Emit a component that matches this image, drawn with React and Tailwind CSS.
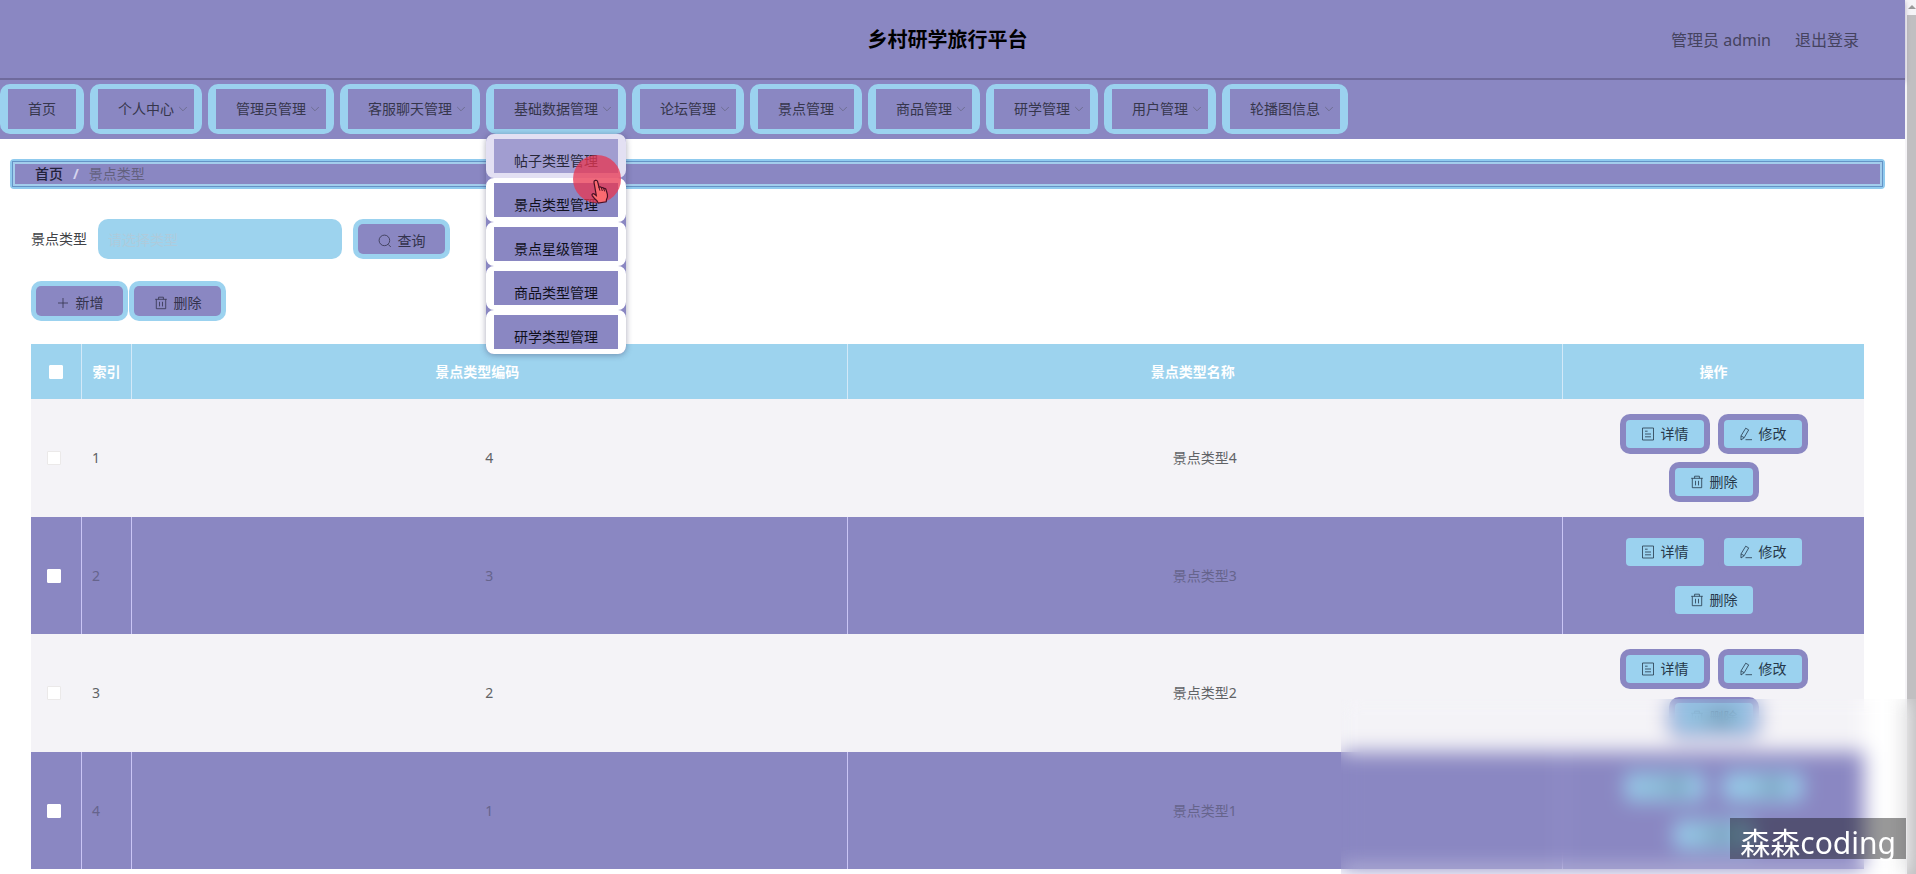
const MENU = [
  { label: "首页", leaf: true },
  { label: "个人中心" },
  { label: "管理员管理" },
  { label: "客服聊天管理" },
  {
    label: "基础数据管理",
    open: true,
    children: ["帖子类型管理", "景点类型管理", "景点星级管理", "商品类型管理", "研学类型管理"],
  },
  { label: "论坛管理" },
  { label: "景点管理" },
  { label: "商品管理" },
  { label: "研学管理" },
  { label: "用户管理" },
  { label: "轮播图信息" },
];

const ROWS = [
  { index: 1, code: "4", name: "景点类型4" },
  { index: 2, code: "3", name: "景点类型3" },
  { index: 3, code: "2", name: "景点类型2" },
  { index: 4, code: "1", name: "景点类型1" },
];

function Icon({ children }) {
  return (
    <svg viewBox="0 0 14 14" className="size-3.5 shrink-0" fill="none" stroke="currentColor" strokeWidth="0.8" aria-hidden="true">
      {children}
    </svg>
  );
}

const SearchIcon = () => (
  <Icon>
    <circle cx="6.4" cy="6.4" r="5.3" />
    <path d="M10.2 10.4 12.8 13" />
  </Icon>
);
const PlusIcon = () => (
  <Icon>
    <path d="M7 2v10M2 7h10" />
  </Icon>
);
const TrashIcon = () => (
  <Icon>
    <path d="M1.200 3.300h11.600M4.600 3.300V1.200h4.800v2.100M2.300 3.300v9.400h9.400V3.300M5.500 5.800v4.600M8.500 5.800v4.600" />
  </Icon>
);
const DocumentIcon = () => (
  <Icon>
    <path d="M1.500 1h11v12h-11zM4 4.200h2.600M4 7h6M4 9.800h6" />
  </Icon>
);
const EditIcon = () => (
  <Icon>
    <path d="M6.700 1.200 9.700 2.900 5.200 10.700 2 13 2 8.900zM2 8.900 5.200 10.700M6.500 12.700h6.500" />
  </Icon>
);

function ChevronDown() {
  return (
    <svg viewBox="0 0 10 10" className="absolute right-[6px] top-1/2 size-2.5 -translate-y-1/2" fill="none" stroke="#6b6a8c" strokeWidth="0.9" aria-hidden="true">
      <path d="M1.200 3 5 6.800 8.800 3" />
    </svg>
  );
}

function Pointer() {
  return (
    <div className="pointer-events-none absolute left-[87px] top-[21px] z-20 size-12 rounded-full bg-[#e83550]/75">
      <svg viewBox="0 0 20 25" className="absolute left-[17px] top-6 h-[25px] w-5" aria-hidden="true">
        <path
          d="M5.200 1.400c1.200-.4 2.200.3 2.500 1.400L9 8.200c.9-.6 2-.3 2.400.6.9-.5 2-.2 2.400.8 1-.4 2 .1 2.300 1.200l1.300 4.600c.5 2.100 0 3.500-.9 5.100l-.3 2.300-8 1.200-1.200-2.200c-1.800-1.200-3.300-3-4.800-5.200-.8-1.300.8-2.600 2.100-1.600l2 1.500L4 3.300c-.2-.9.300-1.700 1.200-1.900z"
          fill="#fb6a70"
          stroke="#4a1024"
          strokeWidth="1.200"
        />
        <path d="M9 8.200l.9 3.500M11.500 9l.8 3M13.900 9.800l.7 2.600" stroke="#4a1024" strokeWidth="1" fill="none" />
      </svg>
    </div>
  );
}

function MenuItem({ item }) {
  return (
    <li className="relative">
      <button
        type="button"
        className="relative block h-[50px] rounded-[10px] border-x-8 border-y-[5px] border-[#9bd2ef] bg-[#9bd2ef] text-sm text-[#36364c]"
        aria-expanded={item.children ? true : undefined}
      >
        <span className="relative flex h-10 items-center bg-[#8a87c2] px-5">
          {item.label}
          {!item.leaf && <ChevronDown />}
        </span>
      </button>
      {item.children && (
        <div className="absolute left-0 top-full z-10 w-full">
          <ul className="rounded-lg bg-[#8a87c2] shadow-[0_1px_6px_rgba(40,40,80,0.4)]">
            {item.children.map((child, i) => (
              <li key={child}>
                <a
                  href="#"
                  className={`block rounded-lg border-x-8 border-y-[5px] text-sm ${
                    i === 0 ? "border-[#e3e0f3] bg-[#e3e0f3] text-[#28283a]" : "border-white bg-white text-[#10101c]"
                  }`}
                >
                  <span className={`flex h-[34px] items-end justify-center pb-0.5 whitespace-nowrap ${i === 0 ? "bg-[#a19dd0]" : "bg-[#8a87c2]"}`}>
                    {child}
                  </span>
                </a>
              </li>
            ))}
          </ul>
          <Pointer />
        </div>
      )}
    </li>
  );
}

function ToolButton({ icon, children }) {
  return (
    <button type="button" className="h-10 rounded-[10px] bg-[#9bd2ef] p-[5px] text-sm text-[#33334c]">
      <span className="flex h-full w-[87px] items-center justify-center gap-1.5 rounded-[5px] bg-[#8a87c2] pt-1">
        {icon}
        {children}
      </span>
    </button>
  );
}

function RowButton({ icon, children }) {
  return (
    <button type="button" className="h-10 w-[90px] rounded-[10px] bg-[#8a87c2] p-1.5 text-sm text-[#26384a]">
      <span className="flex h-full w-full items-center justify-center gap-1.5 rounded bg-[#9bd2ef]">
        {icon}
        {children}
      </span>
    </button>
  );
}

function Checkbox({ label, muted }) {
  return (
    <input
      type="checkbox"
      aria-label={label}
      className={`block size-3.5 appearance-none rounded-[1px] border bg-white ${muted ? "border-[#ebe9e9]" : "border-white"}`}
    />
  );
}

function DataTable() {
  const th = "border-r border-[#d3e9f8] font-bold";
  return (
    <table className="w-full table-fixed border-separate border-spacing-0 text-sm">
      <colgroup>
        <col className="w-[51px]" />
        <col className="w-[50px]" />
        <col />
        <col />
        <col className="w-[301px]" />
      </colgroup>
      <thead>
        <tr className="h-[55px] bg-[#9dd3ee] text-white">
          <th className={`${th} pl-[18px]`}>
            <Checkbox label="全选" />
          </th>
          <th className={th}>索引</th>
          <th className={`${th} pr-6`}>景点类型编码</th>
          <th className={`${th} pr-6`}>景点类型名称</th>
          <th className="font-bold">操作</th>
        </tr>
      </thead>
      <tbody>
        {ROWS.map((row, i) => {
          const dark = i % 2 === 1;
          const line = dark ? "border-r border-[#cac5f5]" : "border-r border-[#f4f3f7]";
          return (
            <tr key={row.index} className={dark ? "h-[117px] bg-[#8a87c2] text-[#66648c]" : "h-[118px] bg-[#f4f3f7] text-[#606266]"}>
              <td className={`${line} pl-4`}>
                <Checkbox label={`选择 ${row.index}`} muted={!dark} />
              </td>
              <td className={`${line} pl-2.5`}>{row.index}</td>
              <td className={`${line} text-center`}>{row.code}</td>
              <td className={`${line} text-center`}>{row.name}</td>
              <td className="px-14">
                <div className="flex flex-wrap justify-center gap-2">
                  <RowButton icon={<DocumentIcon />}>详情</RowButton>
                  <RowButton icon={<EditIcon />}>修改</RowButton>
                  <RowButton icon={<TrashIcon />}>删除</RowButton>
                </div>
              </td>
            </tr>
          );
        })}
      </tbody>
    </table>
  );
}

export default function App() {
  return (
    <div className="relative flex h-screen overflow-hidden bg-white font-['Noto_Sans','Noto_Sans_CJK_SC',sans-serif]">
      <div className="min-w-0 flex-1">
        <header className="relative z-10 grid h-20 grid-cols-[1fr_auto_1fr] items-center border-b-2 border-[#6f6a9c] bg-[#8a87c2] pt-0.5 pr-2.5 shadow-[0_2px_5px_rgba(90,70,120,0.4)]">
          <span />
          <h1 className="text-xl font-bold text-black">乡村研学旅行平台</h1>
          <div className="flex justify-end gap-6 pr-9 text-base text-[#45435f]">
            <span>管理员 admin</span>
            <a href="#">退出登录</a>
          </div>
        </header>

        <nav className="relative z-10 bg-[#8a87c2] pt-1 pb-[5px]">
          <ul className="flex gap-1.5">
            {MENU.map((item) => (
              <MenuItem key={item.label} item={item} />
            ))}
          </ul>
        </nav>

        <main>
          <div className="mt-5 mr-5 ml-2.5 rounded border-2 border-[#8fcaee] bg-[#a3cdec]">
            <div className="border border-[#6593c6] p-0.5">
              <ol className="flex h-5 items-center gap-2.5 bg-[#8a87c2] pl-5 text-sm">
                <li>
                  <a href="#" className="font-medium text-[#22223a]">首页</a>
                </li>
                <li className="font-bold text-[#d5d3ee]">/</li>
                <li className="text-[#63617f]">景点类型</li>
              </ol>
            </div>
          </div>

          <div className="mt-[30px] mr-[41px] ml-[31px]">
            <form className="flex items-center gap-[11px]">
              <label htmlFor="type" className="text-sm text-[#404246]">景点类型</label>
              <input id="type" type="text" placeholder="请选择类型" className="h-10 w-[244px] rounded-[10px] bg-[#9dd3ee] px-2.5 text-sm placeholder:text-[#aecbdc]" />
              <ToolButton icon={<SearchIcon />}>查询</ToolButton>
            </form>
            <div className="mt-[22px] mb-[23px] flex gap-px">
              <ToolButton icon={<PlusIcon />}>新增</ToolButton>
              <ToolButton icon={<TrashIcon />}>删除</ToolButton>
            </div>
            <DataTable />
          </div>
        </main>
      </div>

      <div className="flex w-[11px] shrink-0 flex-col bg-[#f5f4f7] pl-0.5" aria-hidden="true">
        <svg viewBox="0 0 9 15" className="h-[15px] w-[9px]">
          <path d="M1 9 5 5 9 9z" fill="#9a9a9a" />
        </svg>
        <div className="flex-1 bg-[#c0bfc1]" />
      </div>

      <div className="pointer-events-none absolute right-0 bottom-0 z-20 h-[175px] w-[575px] backdrop-blur-[10px]" />
      <div className="absolute right-2.5 bottom-[15px] z-30 flex h-[41px] items-center bg-black/40 px-2.5 pt-2 text-[30px] text-white">
        森森coding
      </div>
    </div>
  );
}
